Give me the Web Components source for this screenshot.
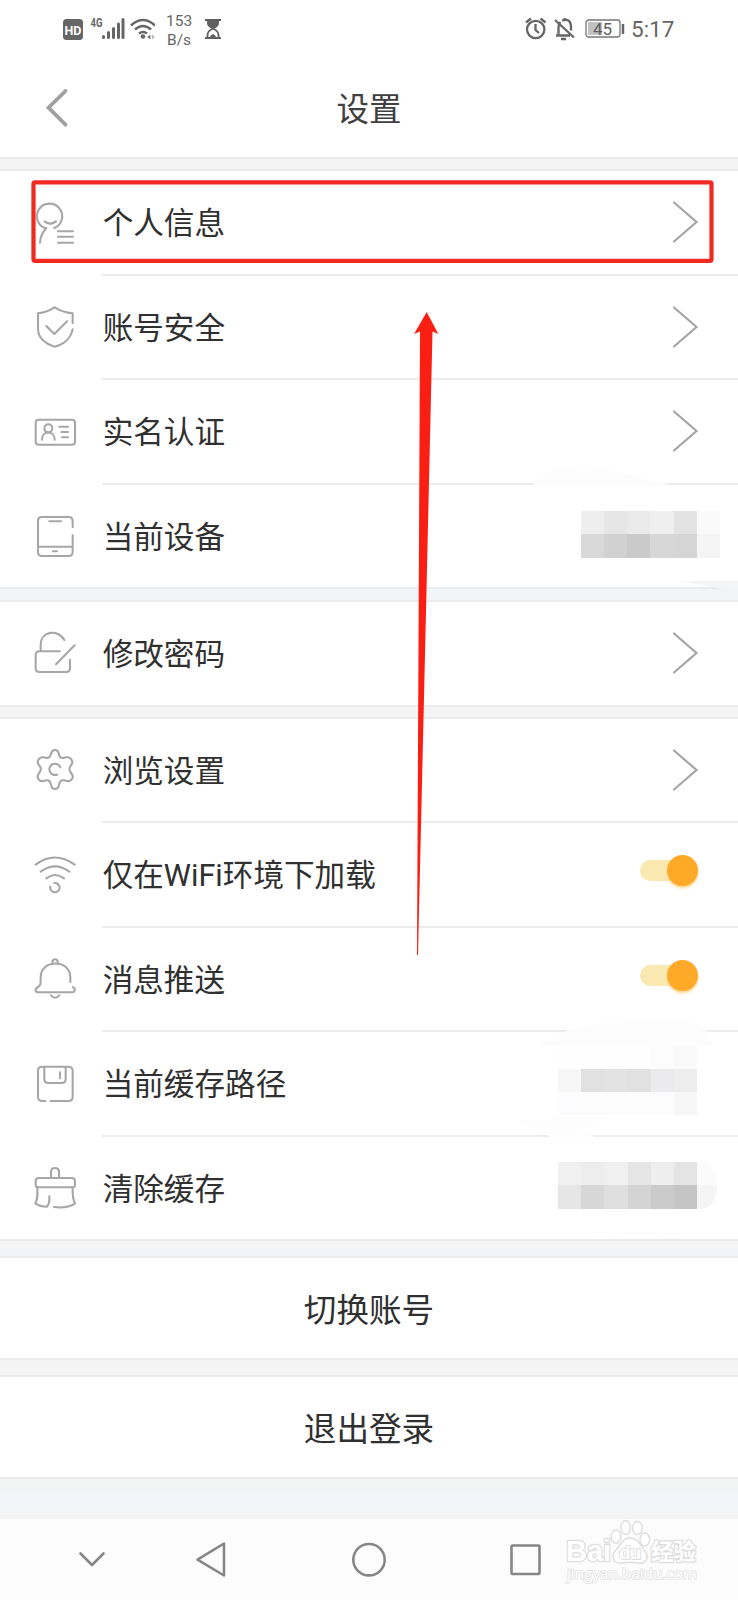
<!DOCTYPE html>
<html lang="zh-CN">
<head>
<meta charset="utf-8">
<title>设置</title>
<style>
    body {
        margin: 0;
        width: 738px;
        height: 1600px;
        overflow: hidden;
        background: #fff;
        font-family: Roboto, "Noto Sans CJK SC", sans-serif;
        color: #303030;
    }
</style>
</head>
<body>
<settings-page></settings-page>

<script>
function define(name, html, setup) {
    const template = document.createElement('template');
    template.innerHTML = html;
    customElements.define(name, class extends HTMLElement {
        constructor() {
            super();
            this.attachShadow({ mode: 'open' });
            this.shadowRoot.appendChild(template.content.cloneNode(true));
        }
        connectedCallback() {
            if (setup) setup(this, this.shadowRoot);
        }
    });
}

// line icons, three units to a pixel
const icons = {
    person: ['99 421', '<path d="M137 503a38 38 0 1 1 26-1"/><path d="M134 482q17 14 34 0M139 502q-18 20-19 44M174 512h45M174 528h45M174 546h45"/>'],
    shield: ['39 44', '<path d="M158 99V69q-30-3-54-18-24 15-50 18v47c0 28 25 46 50 53 26-6 48-24 54-52M79 107l24 24 38-38"/>'],
    card: ['39 358', '<rect x="47" y="387" width="118" height="75" rx="9"/><circle cx="85" cy="413" r="12"/><path d="M66 447c0-29 38-29 38 0M118 408h26M124 424h20M126 440h18"/>'],
    phone: ['39 671', '<path d="M158 710v-18q0-12-12-12H66q-12 0-12 12v93q0 12 12 12h80q12 0 12-12v-50M54 769h104M88 693h35M99 783h12"/>'],
    lock: ['39 94', '<path d="M62 154v-18c0-43 52-49 71-15M119 155H58q-11 0-11 11v40q0 11 11 11h81q11 0 11-11v-26M108 194l56-57"/>'],
    gear: ['39 445', '<path d="M94 461q2-10 11-10t11 10l2 7q3 8 12 7l8-2q9-2 15 5 7 9 2 16l-4 6q-5 9 0 16l5 8q5 8-1 15-6 7-14 5l-9-2q-10-2-13 7l-3 10q-2 9-11 9t-11-9l-3-10q-3-9-12-7l-9 2q-9 2-14-5-6-8-1-15l5-8q5-8 0-16l-5-6q-5-8 2-16 6-7 14-5l8 2q9 1 12-7z"/><path d="M121 503a17 17 0 1 0-10 22"/>'],
    wifi: ['39 758', '<path d="M47 793q57-43 117 0M62 814q43-32 86 0M79 834q26-20 53 0M91 859a14 14 0 1 0 12-11"/>'],
    bell: ['39 112', '<path d="M98 133q-3-14 7-14t8 14M151 187v-14c0-55-89-55-89 0 0 22 0 24-8 29-10 5-9 16 0 16h102q10 0 8-12l-6-4M93 227q12 14 25 0"/>'],
    disk: ['39 425', '<path d="M76 542h-9q-13 0-13-13v-77q0-13 13-13h78q13 0 13 13v77q0 13-13 13H92M73 440v36q0 12 12 12h40q12 0 12-12v-36M120 456v18"/>'],
    brush: ['39 739', '<path d="M93 775v-18q0-12 12-12t12 12v18h38q10 0 10 10v10q0 8-8 8H55q-8 0-8-8v-10q0-10 10-10h56M52 804c1 24 1 34-6 47 10 7 22 10 35 10 7-9 8-18 7-31M158 804c-1 20 0 32 7 48q-24 15-63 10"/>'],
};

define('status-bar', `
    <style>
        :host { display: flex; align-items: center; height: 58px; padding: 0 63px; color: #666; }
        svg { display: block; flex: none; }
        .speed { width: 26px; margin: 3px 13px 0 11px; font-size: 15.5px; line-height: 18.7px; text-align: center; }
        .right { display: flex; align-items: center; margin-left: auto; }
        .time { font-size: 22.5px; margin-left: 6px; line-height: 26px; width: 44px; white-space: nowrap; }
    </style>
    <svg width="92" height="24" viewBox="63 17 92 24" fill="none" stroke="#666">
        <rect x="63" y="19" width="20" height="21" rx="3.5" fill="#666" stroke="none"/>
        <text x="73" y="34.500" font-size="13" font-weight="700" text-anchor="middle" fill="#fff" stroke="none" textLength="17" lengthAdjust="spacingAndGlyphs">HD</text>
        <text x="90.500" y="27" font-size="12" font-weight="700" fill="#666" stroke="none" textLength="12" lengthAdjust="spacingAndGlyphs">4G</text>
        <path stroke-width="3" stroke-linecap="round" d="M103.500 36.500v1M108.500 32.500v5M113.500 28.500v9M118.500 24v13.500M123 19.500v18"/>
        <path stroke-width="2.600" d="M131 25.500q12-11 24 0M135 29.500q8-7 16 0M139 33.500q4-3 8 0"/>
        <circle cx="143" cy="36.500" r="2.300" fill="#666" stroke="none"/>
        <path d="M147 37l3.500-2.500v5z" fill="#777" stroke="none"/><path d="M155 37l-3-2.500v5z" fill="#bbb" stroke="none"/>
    </svg>
    <div class="speed">153<br>B/s</div>
    <svg width="16" height="22" viewBox="0 0 16 22" fill="none" stroke="#606060" stroke-width="1.800">
        <path d="M0 2h16M0 20h16"/><path d="M2 2v3q0 4 6 6 6-2 6-6V2z" fill="#606060" stroke="none"/>
        <path d="M2.500 20v-3q0-4 5.500-6.500 5.500 2.500 5.500 6.500v3"/><path d="M5 20q0-3 3-4 3 1 3 4z" fill="#606060" stroke="none"/>
    </svg>
    <div class="right">
        <svg width="50" height="24" viewBox="525 17 50 24" fill="none" stroke="#666" stroke-width="2.300">
            <circle cx="535.700" cy="29.500" r="8.700"/><path d="M535.500 24v6l3.500 3M526 22.500l5-4M540.500 18.500l5 4"/>
            <path d="M558.500 35V27q0-3 2-5M562 20.500q9-3 9 7v3M556 35.500h14M555 20l19 17.500M561 39h5M564.500 18v3"/>
        </svg>
        <svg width="40" height="20" viewBox="0 0 40 20" style="margin-left:10px">
            <rect x="1" y="1" width="34" height="17" rx="2.500" fill="#fff" stroke="#777" stroke-width="1.300"/>
            <path d="M3 3h14v13H3z" fill="#c2c2c2"/><path d="M38 5v10" stroke="#666" stroke-width="2.500"/>
            <text x="17.500" y="15.500" font-size="17" text-anchor="middle" fill="#606060">45</text>
        </svg>
        <span class="time">5:17</span>
    </div>
`);

define('title-bar', `
    <style>
        :host { display: grid; grid-template-columns: 90px 1fr 90px; align-items: center; height: 99px; }
        svg { margin-left: 43px; display: block; }
        h1 { margin: 5px 0 0; font-size: 32.5px; line-height: 44px; font-weight: 400; text-align: center; color: #404040; }
    </style>
    <svg width="28" height="40" viewBox="0 0 28 40"><path d="M22.500 3L5.500 19.700l17 17" fill="none" stroke="#a0a0a0" stroke-width="3.800" stroke-linecap="round"/></svg>
    <h1><slot></slot></h1>
`);

define('section-gap', `
    <style>
        :host { display: block; box-sizing: border-box; background: #f4f4f4; border: solid #ebebeb; border-width: 2px 0; }
        :host([cool]) { background: #f1f5f8; }
        :host([split]) { background: linear-gradient(#f4f4f4 45%, #f1f5f9 55%); }
        :host([last]) { background: linear-gradient(#f1f5f4 30%, #f2f6fa 40% 70%, #f4f4f4 80%); border-bottom: 0; }
    </style>
`);

define('setting-row', `
    <style>
        :host { display: flex; align-items: center; height: 104.5px; padding-left: 33px; box-sizing: border-box; }
        :host([end]) { height: 102.5px; }
        .icon { width: 44px; height: 44px; flex: none; margin-right: 25px; margin-bottom: 1.5px; }
        :host([end]) .icon { margin-bottom: 0; }
        .body { flex: 1; display: flex; align-items: center; align-self: stretch; border-bottom: 2px solid #ececec; }
        :host([end]) .body { border-bottom: 0; }
        .label { font-size: 30.6px; line-height: 44px; padding: 4px 0 0 0.7px; }
        .value { margin-left: auto; }
    </style>
    <svg class="icon" fill="none" stroke="#a6a6a6" stroke-width="6.200" stroke-linecap="round" stroke-linejoin="round"></svg>
    <div class="body">
        <span class="label"><slot></slot></span>
        <span class="value"><slot name="value"></slot></span>
    </div>
`, (el, root) => {
    const [origin, shapes] = icons[el.getAttribute('icon')];
    const svg = root.querySelector('svg');
    svg.setAttribute('viewBox', origin + ' 132 132');
    svg.innerHTML = shapes;
});

define('row-arrow', `
    <style>:host, svg { display: block; } :host { margin-right: 39px; }</style>
    <svg width="28" height="44" viewBox="0 0 28 44"><path d="M3 2.500L25.500 22 3 41.500" fill="none" stroke="#a5a5a5" stroke-width="2.200" stroke-linecap="round"/></svg>
`);

define('toggle-switch', `
    <style>
        :host { display: flex; align-items: center; justify-content: flex-end; width: 58px; height: 21px; box-sizing: border-box; margin: 0 40px 7px 0; border-radius: 11px; background: linear-gradient(90deg, #f9e9b0 47px, transparent 47px); }
        .thumb { width: 31px; height: 31px; border-radius: 50%; background: #fea928; box-shadow: 0 2px 3px #fcd58b; }
    </style>
    <div class="thumb"></div>
`);

// one shade per cell, rows separated by "/"
define('pixel-mosaic', `
    <style>
        :host { display: grid; grid-auto-rows: 23.25px; overflow: hidden; }
    </style>
`, (el, root) => {
    const rows = el.getAttribute('shades').split('/').map(r => r.trim().split(' '));
    el.style.gridTemplateColumns = `repeat(${rows[0].length}, 23.2px)`;
    for (const shade of rows.flat()) {
        const cell = document.createElement('i');
        cell.style.background = '#' + shade;
        root.appendChild(cell);
    }
});

define('action-button', `
    <style>
        :host { display: flex; align-items: center; justify-content: center; font-size: 32.6px; line-height: 46px; padding-top: 6px; box-sizing: border-box; }
    </style>
    <slot></slot>
`);

define('nav-bar', `
    <style>
        :host { display: flex; align-items: center; height: 81px; background: #fcfcfc; }
        svg { display: block; }
    </style>
    <svg width="738" height="81" viewBox="0 1519 738 81" fill="none" stroke="#868686" stroke-width="2.600" stroke-linecap="round" stroke-linejoin="round">
        <path d="M80.500 1553.500L92 1565l11.500-11.500"/>
        <path d="M224 1543.500v32L197.500 1559.700z"/>
        <circle cx="369" cy="1559.700" r="15.700"/>
        <rect x="511.500" y="1545.500" width="28" height="28.500" rx="1"/>
    </svg>
`);

define('baidu-mark', `
    <style>
        :host { display: block; position: absolute; left: 560px; top: 1515px; }
        svg { display: block; }
        text { paint-order: stroke; stroke-linejoin: round; }
    </style>
    <svg width="150" height="75" viewBox="560 1515 150 75" fill="#fff" stroke="#dedede" stroke-width="1.500">
        <g font-family="'Liberation Sans', sans-serif" font-weight="700">
            <text x="566" y="1561" font-size="29" stroke-width="2.500" textLength="45" lengthAdjust="spacingAndGlyphs">Bai</text>
            <path d="M630 1538c8 0 10 7 14 12 7 8 1 14-6 13-6-1-10-1-16 0-8 1-12-6-6-13 5-5 6-12 14-12z"/>
            <ellipse cx="616" cy="1536.500" rx="4.800" ry="6.500"/><ellipse cx="625.700" cy="1527.500" rx="4.800" ry="7"/>
            <ellipse cx="637.500" cy="1528" rx="4.800" ry="6.500"/><ellipse cx="644.800" cy="1539.500" rx="4.800" ry="6.500"/>
            <text x="619" y="1559" font-size="19" stroke-width="2" textLength="22">du</text>
            <text x="651" y="1560" font-size="22.500" stroke-width="2.500" font-family="'Noto Sans CJK SC', sans-serif">经验</text>
        </g>
        <text x="567" y="1579" font-size="14.500" stroke="#e2e2e2" font-family="'Open Sans', sans-serif" textLength="130" lengthAdjust="spacingAndGlyphs">jingyan.baidu.com</text>
    </svg>
`);

// hand-drawn marks that sit over the list
define('page-marks', `
    <style>
        :host { position: absolute; left: 0; top: 0; pointer-events: none; }
        svg { display: block; }
    </style>
    <svg width="738" height="1600" viewBox="0 0 738 1600">
        <g fill="#fdfdfd">
            <path d="M532 487q8-18 35-20 30-2 45 3l55 14-8 3z"/>
            <path d="M536 1046q34-22 78-24 80-8 90 7l10 17z"/>
            <path d="M515 1117q20 8 42 0l53 0-30 14 18 7h-45q-26-10-38-21z"/>
            <path d="M590 1232q50 3 95 0-40 4-95 0z" fill="#f5f5f5"/>
        </g>
        <path d="M678 581h60v8h-16q-22-5-44-8z" fill="#f4f5f6"/>
        <rect x="33.500" y="182.300" width="678" height="78.500" rx="1.500" fill="none" stroke="#f02a20" stroke-width="4.200"/>
        <path d="M426.700 312L438.300 334 432.500 331.500 418 955h-1L420 331.500 414 334z" fill="#fb1e12"/>
    </svg>
`);

define('settings-page', `
    <style>
        :host { display: flex; flex-direction: column; position: relative; height: 1600px; }
    </style>
    <status-bar></status-bar>
    <title-bar>设置</title-bar>
    <section-gap style="height:14px"></section-gap>
    <setting-row icon="person">个人信息<row-arrow slot="value"></row-arrow></setting-row>
    <setting-row icon="shield">账号安全<row-arrow slot="value"></row-arrow></setting-row>
    <setting-row icon="card">实名认证<row-arrow slot="value"></row-arrow></setting-row>
    <setting-row icon="phone" end>当前设备
        <pixel-mosaic slot="value" style="margin:0 18px 3px 0" shades="eeeeee e6e6e6 eaeaea efefef e3e3e3 fafafa / d9d9d9 d1d1d1 cacaca d7d7d7 d5d5d5 f5f5f5"></pixel-mosaic>
    </setting-row>
    <section-gap cool style="height:15px"></section-gap>
    <setting-row icon="lock" end>修改密码<row-arrow slot="value"></row-arrow></setting-row>
    <section-gap style="height:14px"></section-gap>
    <setting-row icon="gear">浏览设置<row-arrow slot="value"></row-arrow></setting-row>
    <setting-row icon="wifi">仅在WiFi环境下加载<toggle-switch slot="value"></toggle-switch></setting-row>
    <setting-row icon="bell">消息推送<toggle-switch slot="value"></toggle-switch></setting-row>
    <setting-row icon="disk">当前缓存路径
        <pixel-mosaic slot="value" style="margin:0 41px 6px 0" shades="fefefe fefefe fefefe fefefe fcfcfc fafafa / f7f7f7 e1e1e2 e3e3e3 e1e1e2 ebebed ededed / fcfcfe fcfcfc fcfcfc fcfcfc fcfcfc f7f7f7"></pixel-mosaic>
    </setting-row>
    <setting-row icon="brush" end>清除缓存
        <pixel-mosaic slot="value" style="margin:0 21px 5px 0;width:159px;border-radius:0 18px 18px 0 / 0 28px 28px 0" shades="f0f0f0 ededed f0f0f0 e6e6e6 eeeeee e4e4e4 fbfbfb / e6e6e6 d7d7d7 dfdfdf d4d4d4 cbcbcb c5c5c5 f5f5f5"></pixel-mosaic>
    </setting-row>
    <section-gap split style="height:18.500px"></section-gap>
    <action-button style="height:100.500px">切换账号</action-button>
    <section-gap style="height:18.500px"></section-gap>
    <action-button style="height:100.500px">退出登录</action-button>
    <section-gap last style="height:42px"></section-gap>
    <nav-bar></nav-bar>
    <baidu-mark></baidu-mark>
    <page-marks></page-marks>
`);
</script>
</body>
</html>
